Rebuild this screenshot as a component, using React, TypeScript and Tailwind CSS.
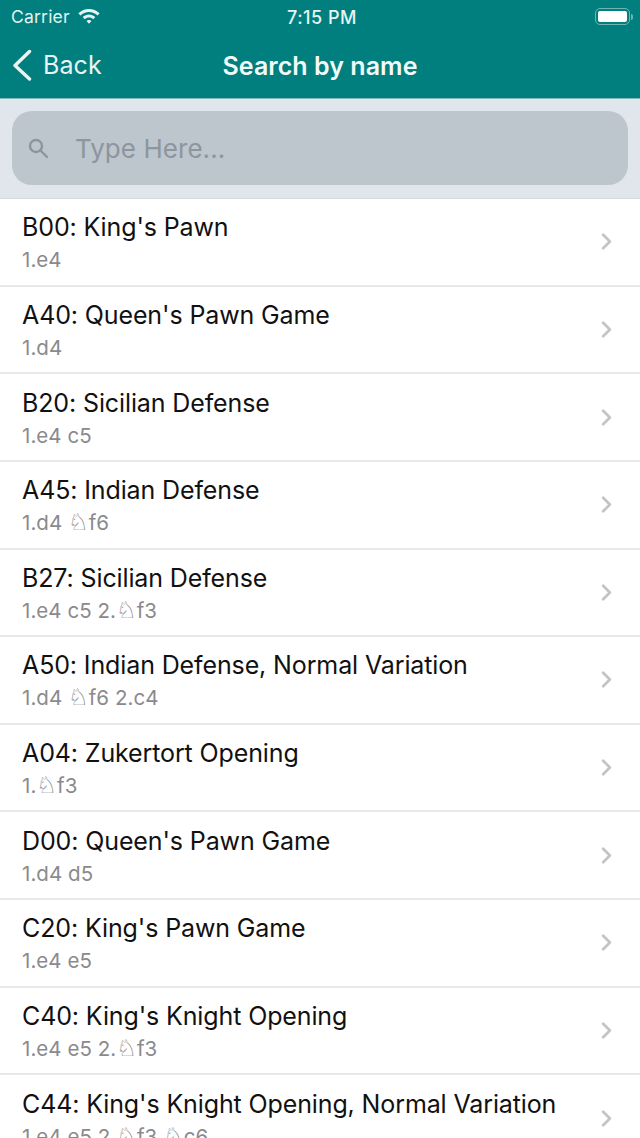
import { ChevronRight } from "lucide-react";

const OPENINGS = [
  { name: "B00: King's Pawn", moves: "1.e4" },
  { name: "A40: Queen's Pawn Game", moves: "1.d4" },
  { name: "B20: Sicilian Defense", moves: "1.e4 c5" },
  { name: "A45: Indian Defense", moves: "1.d4 ♘f6" },
  { name: "B27: Sicilian Defense", moves: "1.e4 c5 2.♘f3" },
  { name: "A50: Indian Defense, Normal Variation", moves: "1.d4 ♘f6 2.c4" },
  { name: "A04: Zukertort Opening", moves: "1.♘f3" },
  { name: "D00: Queen's Pawn Game", moves: "1.d4 d5" },
  { name: "C20: King's Pawn Game", moves: "1.e4 e5" },
  { name: "C40: King's Knight Opening", moves: "1.e4 e5 2.♘f3" },
  { name: "C44: King's Knight Opening, Normal Variation", moves: "1.e4 e5 2.♘f3 ♘c6" },
];

function StatusBar() {
  return (
    <div className="flex h-[33px] items-center justify-between pl-[11px] pr-[7px] pt-[2px] text-[#e6f4f3]">
      <div className="flex w-[120px] items-center gap-[7px]">
        <span className="text-[17.500px] tracking-[0.2px]">Carrier</span>
        <svg width="24" height="18" viewBox="0 0 24 18" fill="currentColor" className="-mt-[5px]">
          <path d="M12 3C8 3 4.400 4.600 1.400 7.200l2 2.200C5.800 7.300 8.800 6 12 6s6.200 1.300 8.600 3.400l2-2.200C19.600 4.600 16 3 12 3z" />
          <path d="M12 8.500c-2.300 0-4.500.9-6.300 2.500l2 2.200c1.200-1.100 2.700-1.700 4.300-1.700s3.100.6 4.300 1.700l2-2.200c-1.800-1.600-4-2.500-6.300-2.500z" />
          <path d="M12 14c-1 0-1.800.4-2.500 1l2.500 2.700 2.500-2.700c-.7-.6-1.500-1-2.500-1z" />
        </svg>
      </div>
      <span className="text-[18px] font-medium tracking-[0.5px]">7:15 PM</span>
      <div className="-mt-[2px] flex w-[120px] items-center justify-end">
        <div className="flex h-[17px] w-[35px] items-center rounded-[5px] border border-[#6fb5b1] p-[2px]">
          <div className="h-full w-full rounded-[2px] bg-white" />
        </div>
        <div className="ml-[1px] h-[6px] w-[2px] rounded-r-sm bg-[#6fb5b1]" />
      </div>
    </div>
  );
}

function NavBar() {
  return (
    <div className="relative flex h-[66px] items-center justify-center border-b border-[#7fb8b8] pt-[2px]">
      <button className="absolute left-[12px] top-[16px] flex items-center gap-[11px] text-[#e8f5f4]">
        <svg width="20" height="32" viewBox="0 0 20 32" fill="none" stroke="currentColor" strokeWidth="3.400" strokeLinecap="round" strokeLinejoin="round">
          <path d="M17.500 2.500 3 16.500 17.500 30" />
        </svg>
        <span className="text-[25px] leading-none tracking-[0.1px]">Back</span>
      </button>
      <h1 className="text-[25px] font-semibold tracking-[0.05px] text-[#f2faf9]">Search by name</h1>
    </div>
  );
}

function SearchBar() {
  return (
    <div className="h-[100px] shrink-0 border-b border-[#d6d9dd] bg-[#e1e6ed] px-[12px] pt-[12px]">
      <div className="flex h-[74px] items-center rounded-[20px] bg-[#bdc5cd] pl-[16px]">
        <svg width="21" height="21" viewBox="0 0 21 21" fill="none" stroke="#8b959e" strokeWidth="2.400" strokeLinecap="round">
          <circle cx="8" cy="8" r="6" />
          <path d="m12.500 12.500 6.500 6.500" />
        </svg>
        <span className="ml-[26px] text-[26px] tracking-[0.05px] text-[#8c969f]">Type Here...</span>
      </div>
    </div>
  );
}

// knight glyph is larger than the surrounding text in the reference
function Moves({ text }: { text: string }) {
  const parts = text.split("♘");
  return (
    <p className="mt-[4px] h-[25px] whitespace-nowrap text-[20.500px] leading-[25px] tracking-[0.05px] text-[#8a8a8e]">
      {parts.map((part, i) => (
        <span key={i}>
          {i > 0 && <span className="font-['DejaVu_Sans'] text-[23px] leading-none text-[#77777b]">♘</span>}
          {part}
        </span>
      ))}
    </p>
  );
}

function OpeningRow({ name, moves }: { name: string; moves: string }) {
  return (
    <div className="flex h-[87.640px] shrink-0 items-center border-b-2 border-[#e8e8ea] bg-white pl-[22px] pr-[20px]">
      <div className="min-w-0 flex-1 pt-[1px]">
        <p className="whitespace-nowrap text-[25px] leading-[31px] tracking-[-0.12px] text-[#111111]">{name}</p>
        <Moves text={moves} />
      </div>
      <ChevronRight className="h-[27px] w-[27px] shrink-0 text-[#c4c4c7]" strokeWidth={2.400} />
    </div>
  );
}

export default function App() {
  return (
    <div className="flex h-[1138px] w-[640px] flex-col overflow-hidden bg-white font-['Inter','DejaVu_Sans',sans-serif]">
      <div className="shrink-0 bg-[#007f7e]">
        <StatusBar />
        <NavBar />
      </div>
      <SearchBar />
      {OPENINGS.map((o) => (
        <OpeningRow key={o.name} name={o.name} moves={o.moves} />
      ))}
    </div>
  );
}
